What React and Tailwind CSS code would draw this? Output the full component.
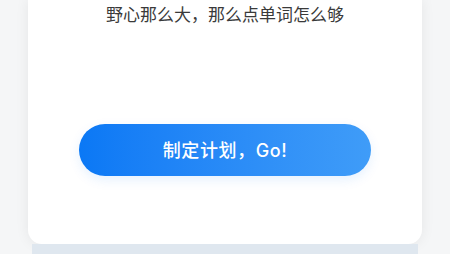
export default function App() {
  return (
    <div
      className="w-[450px] h-[254px] overflow-hidden bg-[#f5f6f7] px-[28px]"
      style={{ fontFamily: '"Noto Sans CJK SC", "Noto Sans", sans-serif' }}
    >
      <div className="flex flex-col">
        {/* main card */}
        <div className="h-[244px] bg-white rounded-b-[14px] shadow-[0_0_14px_rgba(0,0,0,0.07)] flex flex-col items-center">
          <p className="mt-[2px] text-[17px] leading-[24px] text-[#3a3a3a]">
            野心那么大，那么点单词怎么够
          </p>
          <button
            className="mt-[98px] w-[292px] h-[52px] rounded-full bg-gradient-to-r from-[#0a78f5] to-[#3f9cf8] text-white text-[18px] tracking-[0.6px] font-medium shadow-[0_4px_12px_rgba(10,120,245,0.1)]"
            style={{ fontFamily: 'Inter, "Noto Sans CJK SC", sans-serif' }}
          >
            制定计划，Go!
          </button>
        </div>
        {/* stacked card behind */}
        <div className="h-[10px] mx-[4px] bg-[#dfe7ef]" />
      </div>
    </div>
  );
}
